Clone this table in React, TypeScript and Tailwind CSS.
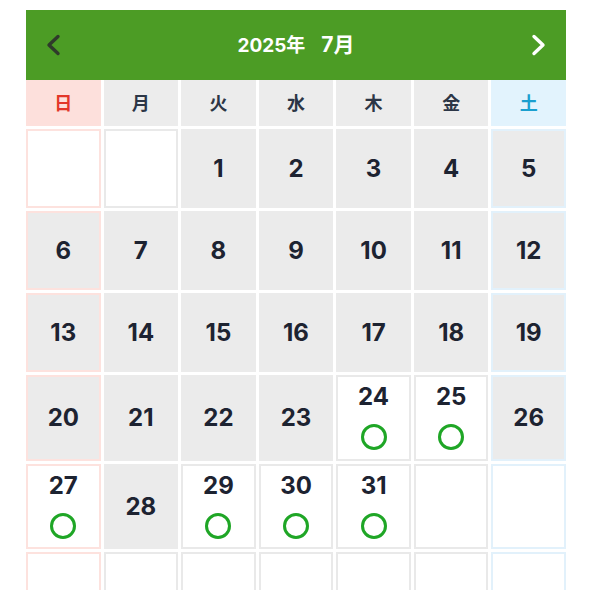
import React from "react";

type Cell = { day?: number; open?: boolean };

const weekdays = ["日", "月", "火", "水", "木", "金", "土"];
const openDays = [24, 25, 27, 29, 30, 31];

const buildWeeks = (): Cell[][] => {
  const cells: Cell[] = [{}, {}];
  for (let d = 1; d <= 31; d++) cells.push({ day: d, open: openDays.includes(d) });
  while (cells.length < 42) cells.push({});
  const weeks: Cell[][] = [];
  for (let i = 0; i < 42; i += 7) weeks.push(cells.slice(i, i + 7));
  return weeks;
};

const rowHeights = ["h-[79px]", "h-[79px]", "h-[79px]", "h-[86px]", "h-[85px]", "h-[79px]"];

const headClass = (i: number) =>
  i === 0
    ? "bg-[#fde0dc] text-[#e3372a]"
    : i === 6
    ? "bg-[#e2f3fd] text-[#1a9fcf]"
    : "bg-[#ececec] text-[#2c3646]";

const borderClass = (i: number, gray: boolean) =>
  i === 0
    ? "border-[#fde2de]"
    : i === 6
    ? "border-[#e2f1fb]"
    : gray
    ? "border-[#ebebeb]"
    : "border-[#e9e9e9]";

const DayCell = ({ cell, col, h }: { cell: Cell; col: number; h: string }) => {
  const gray = cell.day !== undefined && !cell.open;
  return (
    <div
      className={`${h} border-2 ${borderClass(col, gray)} ${
        gray ? "bg-[#ebebeb]" : "bg-white"
      } flex flex-col items-center ${cell.open ? "justify-start pt-[5px]" : "justify-center"}`}
    >
      {cell.day !== undefined && (
        <span className="text-[24px] font-bold leading-[30px] text-[#1d2331]">{cell.day}</span>
      )}
      {cell.open && (
        <span className="mt-[12px] w-[26px] h-[26px] rounded-full border-[3px] border-[#1fa626]" />
      )}
    </div>
  );
};

export default function App() {
  const weeks = buildWeeks();
  return (
    <div
      className="w-[591px] h-[590px] overflow-hidden bg-white pt-[10px] pl-[26px]"
      style={{ fontFamily: '"Inter", "Noto Sans CJK JP", sans-serif' }}
    >
      <div className="w-[540px]">
        <div className="h-[70px] bg-[#4c9c25] flex items-center justify-between px-[18px]">
          <svg width="19" height="22" viewBox="0 0 19 22" fill="none">
            <path d="M14 2.5 L5 11 L14 19.5" stroke="#2f3a2b" strokeWidth="3.4" strokeLinecap="round" strokeLinejoin="round" />
          </svg>
          <div className="flex items-baseline text-white font-bold gap-[16px]">
            <span className="text-[19px]">2025年</span>
            <span className="text-[21px]">7月</span>
          </div>
          <svg width="19" height="22" viewBox="0 0 19 22" fill="none">
            <path d="M5 2.5 L14 11 L5 19.5" stroke="#ffffff" strokeWidth="3.4" strokeLinecap="round" strokeLinejoin="round" />
          </svg>
        </div>
        <div className="grid grid-cols-7 gap-x-[3px]">
          {weekdays.map((w, i) => (
            <div key={w} className={`h-[46px] flex items-center justify-center text-[18px] font-bold ${headClass(i)}`}>
              {w}
            </div>
          ))}
        </div>
        <div className="flex flex-col gap-[3px] mt-[3px]">
          {weeks.map((week, wi) => (
            <div key={wi} className="grid grid-cols-7 gap-x-[3px]">
              {week.map((cell, ci) => (
                <DayCell key={ci} cell={cell} col={ci} h={rowHeights[wi]} />
              ))}
            </div>
          ))}
        </div>
      </div>
    </div>
  );
}
